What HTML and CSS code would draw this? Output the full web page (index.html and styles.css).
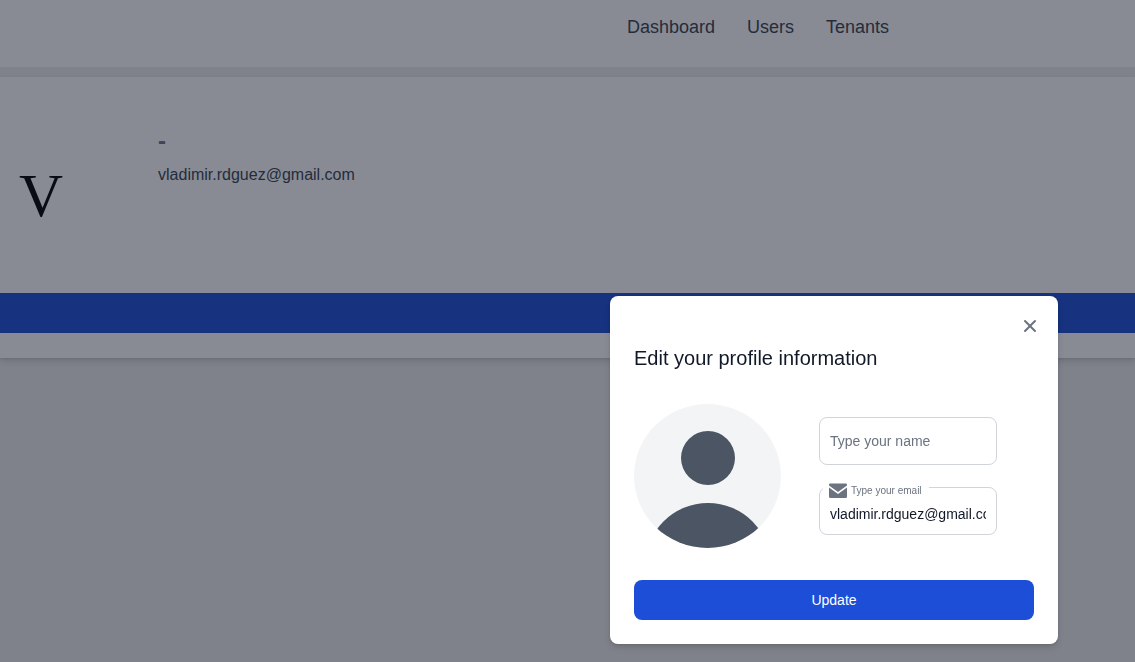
FILE: index.html
```html
<!DOCTYPE html>
<html lang="en">
<head>
<meta charset="utf-8">
<meta name="viewport" content="width=device-width, initial-scale=1">
<title>Profile</title>
<link rel="stylesheet" href="styles.css">
</head>
<body>
<header class="topbar">
  <nav class="nav">
    <a href="#">Dashboard</a>
    <a href="#">Users</a>
    <a href="#">Tenants</a>
  </nav>
</header>
<main class="profile">
  <section class="summary">
    <div class="initial">V</div>
    <div class="details">
      <h1 class="name">-</h1>
      <p class="email">vladimir.rdguez@gmail.com</p>
    </div>
  </section>
  <div class="band"></div>
</main>
<div class="overlay">
  <form class="modal" role="dialog" aria-labelledby="modal-title">
    <button class="close" type="button" aria-label="Close">
      <svg width="20" height="20" viewBox="0 0 20 20" fill="currentColor"><path fill-rule="evenodd" clip-rule="evenodd" d="M4.293 4.293a1 1 0 011.414 0L10 8.586l4.293-4.293a1 1 0 111.414 1.414L11.414 10l4.293 4.293a1 1 0 01-1.414 1.414L10 11.414l-4.293 4.293a1 1 0 01-1.414-1.414L8.586 10 4.293 5.707a1 1 0 010-1.414z"/></svg>
    </button>
    <h2 class="title" id="modal-title">Edit your profile information</h2>
    <div class="fields">
      <div class="avatar">
        <svg width="180" height="180" viewBox="0 0 20 20" fill="currentColor"><path fill-rule="evenodd" clip-rule="evenodd" d="M10 9a3 3 0 100-6 3 3 0 000 6zm-7 9a7 7 0 1114 0H3z"/></svg>
      </div>
      <div class="inputs">
        <input class="input" type="text" placeholder="Type your name" aria-label="Type your name">
        <div class="floating">
          <input class="input input-filled" id="email" type="email" value="vladimir.rdguez@gmail.com">
          <label class="label" for="email">
            <svg width="18" height="16" viewBox="0 0 18 16" fill="currentColor"><path d="M0 2.6V1.5Q0 .5 1 .5H17Q18 .5 18 1.5V2.6L9 8.9Z"/><path d="M0 4.6L9 11L18 4.6V13.5Q18 15 16.5 15H1.5Q0 15 0 13.5Z"/></svg>
            Type your email
          </label>
        </div>
      </div>
    </div>
    <button class="update" type="submit">Update</button>
  </form>
</div>
</body>
</html>
```
FILE: styles.css
```css
* { box-sizing: border-box; }
body {
  margin: 0;
  min-height: 100vh;
  background: #edebee;
  color: #111827;
  font-family: "Liberation Sans", Arial, sans-serif;
}
h1, h2, p { margin: 0; }
button, input { font: inherit; }

.topbar {
  padding: 13px 0 26px 627px;
  background: #fff;
}
.nav { display: flex; gap: 32px; }
.nav a {
  color: #374151;
  font-size: 18px;
  line-height: 28px;
  text-decoration: none;
}

.profile {
  margin-top: 10px;
  padding-bottom: 25px;
  background: #fff;
  box-shadow: 0 1px 3px rgba(0, 0, 0, .1), 0 4px 6px rgba(0, 0, 0, .1);
}
.summary {
  display: flex;
  gap: 95px;
  min-height: 216px;
  padding: 48px 19px;
}
.initial {
  padding-top: 39px;
  color: #000;
  font-family: "Liberation Serif", "Times New Roman", serif;
  font-size: 61px;
  line-height: 64px;
}
.name {
  color: #6b7280;
  font-size: 24px;
  line-height: 32px;
}
.email {
  padding-top: 6px;
  color: #374151;
  font-size: 16px;
  line-height: 24px;
}
.band { height: 40px; background: #1d4ed8; }

.overlay {
  position: fixed;
  inset: 0;
  display: flex;
  align-items: flex-end;
  justify-content: flex-end;
  padding: 18px 77px;
  background: rgba(17, 24, 39, .5);
}
.modal {
  display: flex;
  flex-direction: column;
  width: 448px;
  max-width: 100%;
  padding: 14px 24px 24px;
  border-radius: 8px;
  background: #fff;
  box-shadow: 0 1px 3px rgba(0, 0, 0, .1), 0 4px 6px rgba(0, 0, 0, .1);
}
.close {
  display: flex;
  align-self: flex-end;
  margin-right: -12px;
  padding: 6px;
  border: 0;
  background: none;
  color: #6b7280;
}
.title {
  padding-bottom: 30px;
  font-size: 20px;
  font-weight: 400;
  line-height: 32px;
}
.fields {
  display: flex;
  align-items: center;
  gap: 38px;
  padding-right: 37px;
  padding-bottom: 32px;
}
.avatar {
  display: flex;
  flex: none;
  justify-content: center;
  width: 147px;
  height: 144px;
  overflow: hidden;
  border-radius: 50%;
  background: #f3f4f6;
  color: #4b5563;
}
.avatar svg { flex: none; }
.inputs {
  display: flex;
  flex: 1;
  flex-direction: column;
  gap: 22px;
  min-width: 0;
}
.input {
  display: block;
  width: 100%;
  height: 48px;
  padding: 0 10px;
  border: 1px solid #d1d5db;
  border-radius: 8px;
  background: #fff;
  color: #111827;
  font-size: 14px;
}
.input::placeholder { color: #6b7280; }
.floating { position: relative; }
.input-filled { padding-top: 6px; }
.label {
  position: absolute;
  top: -4px;
  left: 4px;
  display: flex;
  align-items: center;
  gap: 4px;
  height: 16px;
  padding: 0 7px 0 6px;
  background: #fff;
  color: #6b7280;
  font-size: 10px;
  line-height: 16px;
  white-space: nowrap;
}
.update {
  height: 40px;
  border: 0;
  border-radius: 8px;
  background: #1d4ed8;
  color: #fff;
  font-size: 14px;
}
```
